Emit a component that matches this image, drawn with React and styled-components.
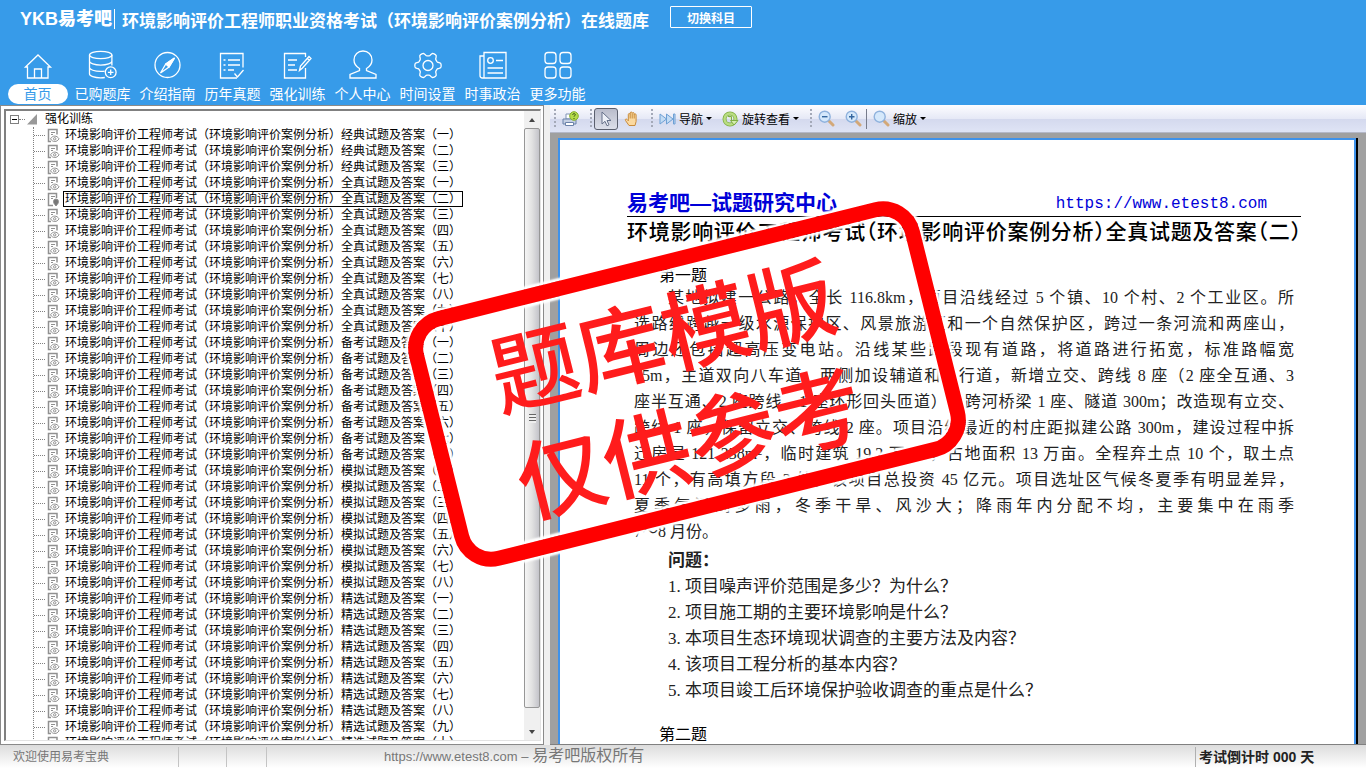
import React from "react";
import styled, { createGlobalStyle, css } from "styled-components";

const NUMBERS = ["一", "二", "三", "四", "五", "六", "七", "八", "九", "十"];

const SERIES = [
  { name: "经典", count: 3 },
  { name: "全真", count: 10 },
  { name: "备考", count: 8 },
  { name: "模拟", count: 8 },
  { name: "精选", count: 10 },
];

const PAPERS = SERIES.flatMap((series) =>
  NUMBERS.slice(0, series.count).map((number) => ({
    id: `${series.name}-${number}`,
    title: `环境影响评价工程师考试（环境影响评价案例分析）${series.name}试题及答案（${number}）`,
  }))
);

const SELECTED = "全真-二";

const BODY_LINES = [
  "选路线跨越一级水源保护区、风景旅游区和一个自然保护区，跨过一条河流和两座山，",
  "周边还包括超高压变电站。沿线某些路段现有道路，将道路进行拓宽，标准路幅宽",
  "75m，主道双向八车道，两侧加设辅道和人行道，新增立交、跨线 8 座（2 座全互通、3",
  "座半互通、2 座跨线、1 座环形回头匝道），跨河桥梁 1 座、隧道 300m；改造现有立交、",
  "跨线 1 座，保留立交、跨线 2 座。项目沿线最近的村庄距拟建公路 300m，建设过程中拆",
  "迁房屋 121 238m²，临时建筑 19.2 万 m²，占地面积 13 万亩。全程弃土点 10 个，取土点",
  "11 个，有高填方段 3 处。该项目总投资 45 亿元。项目选址区气候冬夏季有明显差异，",
  "夏季气温高多雨，冬季干旱、风沙大；降雨年内分配不均，主要集中在雨季",
];

const QUESTIONS = [
  "1. 项目噪声评价范围是多少？为什么？",
  "2. 项目施工期的主要环境影响是什么？",
  "3. 本项目生态环境现状调查的主要方法及内容？",
  "4. 该项目工程分析的基本内容？",
  "5. 本项目竣工后环境保护验收调查的重点是什么？",
];

const gearPoints = Array.from({ length: 72 }, (_, i) => {
  const angle = (i * Math.PI) / 36;
  const radius = 11.4 + 1.8 * Math.tanh(2 * Math.cos(6 * angle));
  return `${(16 + radius * Math.cos(angle)).toFixed(2)},${(16.5 + radius * Math.sin(angle)).toFixed(2)}`;
}).join(" ");

const NAV = [
  {
    name: "首页",
    icon: (
      <>
        <path d="M3.500 18 16 6l12.500 12h-2.500v11H5.500V18z" />
        <path d="M12.500 29v-9h7v9" />
      </>
    ),
  },
  {
    name: "已购题库",
    icon: (
      <>
        <ellipse cx="13.700" cy="6" rx="11.200" ry="3.700" />
        <path d="M2.500 6v19c0 2 5 3.800 11 3.800 1.500 0 3-.1 4.300-.3M24.900 6v10.500M2.500 12.300c0 2 5 3.800 11.200 3.800s11.200-1.800 11.200-3.800M2.500 18.600c0 2 5 3.800 11.200 3.800 1.400 0 2.700 0 4-.3" />
        <circle cx="23.700" cy="23.300" r="5.400" />
        <path d="M23.700 20.500v5.600M20.900 23.300h5.600" />
      </>
    ),
  },
  {
    name: "介绍指南",
    icon: (
      <>
        <circle cx="15.500" cy="16" r="12.500" />
        <path d="M22.500 9 17 18l-8.500 6L13.800 15z" />
        <path d="M22.500 9 13.800 15l3.200 3z" fill="#fff" />
      </>
    ),
  },
  {
    name: "历年真题",
    icon: (
      <>
        <path d="M26 18.500V4.500H3.500V29H20" />
        <path d="M6.500 11h2M11 11h12M6.500 16h2M11 16h12M6.500 21h2M11 21h6M17.500 24.500l3 3.500 6-7" />
      </>
    ),
  },
  {
    name: "强化训练",
    icon: (
      <>
        <path d="M23.500 8V4.500h-21V29h21V19" />
        <path d="M6 11h9M6 16h7M6 21h9M17.500 21.500l1-4.500L27 7.500l2 2-8.500 9.500zM25.500 9.500l2 2" />
      </>
    ),
  },
  {
    name: "个人中心",
    icon: (
      <path d="M12.500 19.500C9 17.500 7 14.500 7 11c0-5.500 4-9 9-9s9 3.500 9 9c0 3.500-2 6.500-5.500 8.500v2l9.500 4V29H3v-3.500l9.500-4z" />
    ),
  },
  {
    name: "时间设置",
    icon: (
      <>
        <polygon points={gearPoints} />
        <circle cx="16" cy="16.500" r="5" />
      </>
    ),
  },
  {
    name: "时事政治",
    icon: (
      <>
        <path d="M7 29V3.500h22V29H5.500A2.500 2.500 0 0 1 3 26.500V7h4M7 7v19" />
        <circle cx="13.500" cy="11.500" r="2.800" />
        <path d="M19 11.500h7M10.500 19h15.500M10.500 24h15.500" />
      </>
    ),
  },
  {
    name: "更多功能",
    icon: (
      <>
        <rect x="3" y="3.500" width="11" height="11" rx="3" />
        <rect x="18" y="3.500" width="11" height="11" rx="3" />
        <rect x="3" y="18" width="11" height="11" rx="3" />
        <rect x="18" y="18" width="11" height="11" rx="3" />
      </>
    ),
  },
];

function PaperIcon({ current }) {
  return (
    <svg width="13" height="15" viewBox="0 0 13 15" fill="none" stroke="#909090" aria-hidden="true">
      <path d={current ? "M9.500 6V1.500h-8v12h4.500" : "M10 6.500V1.500H1.500v12H4"} strokeWidth="1.500" />
      <path d="M4 4.500h4M4 6.500h2" />
      {current ? (
        <path d="M9 14c-2-2.500-2.500-3-2.500-4.500a2.500 2.500 0 0 1 5 0C11.500 11 11 11.500 9 14z" fill="#777" />
      ) : (
        <>
          <path d="M3.500 10.800c2-3.600 6.500-3.600 8.500 0-2 3.600-6.500 3.600-8.500 0z" fill="#fff" />
          <circle cx="7.700" cy="10.800" r="1.200" />
        </>
      )}
    </svg>
  );
}

function PrintIcon() {
  return (
    <svg width="17" height="16" viewBox="0 0 17 16" aria-hidden="true">
      <path d="M4 3h7v5H4z" fill="#fff" stroke="#7f93b5" />
      <path d="M1 8h13v5H1z" fill="#c5d0e4" stroke="#6b82aa" />
      <path d="M3.500 11.500h8v3h-8z" fill="#fff" stroke="#6b82aa" />
      <circle cx="12" cy="5" r="4.300" fill="#b4dc4a" stroke="#86ad32" />
      <path d="M10.700 4c0-2 3-1.600 2.600 0-.2.700-1.300.8-1.300 1.700M12 7v1" fill="none" stroke="#365010" />
    </svg>
  );
}

function PointerIcon() {
  return (
    <svg width="16" height="18" viewBox="0 0 16 18" aria-hidden="true">
      <path d="M4 2v12l3-2.700 2 4.500 2-1-2-4.300h4z" fill="#eef1f8" stroke="#66718a" />
    </svg>
  );
}

function HandIcon() {
  return (
    <svg width="16" height="16" viewBox="0 0 16 16" aria-hidden="true">
      <path
        d="M5 14.500 1.500 9.500c-.8-1.300.7-2 1.600-1l1.200 1.300V3.500c0-1.300 1.800-1.300 1.900 0V2c.1-1.400 2-1.300 2 0v.5c.2-1.300 2-1.200 2 .1v1c.3-1.100 1.900-1 1.900.3v6.600L11 14.500z"
        fill="#fbd9a0"
        stroke="#c98b3b"
      />
      <path d="M6.200 3.500v4M8.200 3v4.500M10.200 3.500v4" stroke="#c98b3b" />
    </svg>
  );
}

function NavigateIcon() {
  return (
    <svg width="17" height="14" viewBox="0 0 17 14" fill="#c3dcf5" stroke="#6ea0d4" aria-hidden="true">
      <path d="M1 2l6.500 5L1 12zM7.500 2 14 7l-6.500 5zM14.500 2h1.500v10h-1.500z" />
    </svg>
  );
}

function RotateIcon() {
  return (
    <svg width="17" height="16" viewBox="0 0 17 16" fill="none" aria-hidden="true">
      <circle cx="8" cy="8" r="5.500" stroke="#7fae43" strokeWidth="4" />
      <circle cx="8" cy="8" r="5.500" stroke="#b9dd82" strokeWidth="2.400" />
      <path d="M6 5.500h3.500V9M8.500 9.500H16L12 14z" stroke="#7fae43" fill="#d5edb0" />
    </svg>
  );
}

function LensIcon({ sign }) {
  return (
    <svg width="17" height="17" viewBox="0 0 17 17" aria-hidden="true">
      <path d="M10.500 10.500 15 15" stroke="#d3a878" strokeWidth="3" strokeLinecap="round" />
      <circle cx="6.700" cy="6.700" r="5.500" fill="#d5e8fb" stroke="#8fb2dd" strokeWidth="1.400" />
      {sign && <path d={sign === "plus" ? "M4 6.700h5.500M6.700 4v5.500" : "M4 6.700h5.500"} stroke="#34669f" strokeWidth="1.400" />}
    </svg>
  );
}

export default function App() {
  return (
    <Screen>
      <GlobalStyle />
      <Header>
        <TitleRow>
          <Brand>YKB易考吧</Brand>
          <Title>环境影响评价工程师职业资格考试（环境影响评价案例分析）在线题库</Title>
          <SwitchButton type="button">切换科目</SwitchButton>
        </TitleRow>
        <Nav>
          {NAV.map((item, index) => (
            <NavLink key={item.name} href="#">
              <svg width="32" height="32" viewBox="0 0 32 32" fill="none" stroke="#fff" strokeWidth="1.300" aria-hidden="true">
                {item.icon}
              </svg>
              <NavLabel $active={index === 0}>{item.name}</NavLabel>
            </NavLink>
          ))}
        </Nav>
      </Header>

      <Main>
        <Sidebar>
          <TreeFrame>
            <Tree>
              <Root>
                <Toggle type="button" aria-label="收起" />
                <Branch $short />
                <svg width="12" height="11" viewBox="0 0 12 11" aria-hidden="true">
                  <path d="M10 0v10.500H0z" fill="#999" />
                </svg>
                <RootName>强化训练</RootName>
              </Root>
              <Papers>
                {PAPERS.map((paper) => (
                  <PaperRow key={paper.id}>
                    <Branch />
                    <PaperIcon current={paper.id === SELECTED} />
                    <PaperButton type="button" $selected={paper.id === SELECTED}>
                      {paper.title}
                    </PaperButton>
                  </PaperRow>
                ))}
              </Papers>
            </Tree>
            <Scrollbar>
              <ScrollButton type="button" aria-label="向上" $up />
              <Thumb>
                <Ridge />
              </Thumb>
              <ScrollButton type="button" aria-label="向下" />
            </Scrollbar>
          </TreeFrame>
        </Sidebar>

        <Viewer>
          <Toolbar>
            <Grip />
            <ToolButton type="button" aria-label="打印">
              <PrintIcon />
            </ToolButton>
            <Grip />
            <ToolButton type="button" aria-label="选择" $pressed>
              <PointerIcon />
            </ToolButton>
            <ToolButton type="button" aria-label="拖动">
              <HandIcon />
            </ToolButton>
            <Grip />
            <ToolButton type="button">
              <NavigateIcon />
              导航
              <Caret />
            </ToolButton>
            <ToolButton type="button">
              <RotateIcon />
              旋转查看
              <Caret />
            </ToolButton>
            <Grip />
            <ToolButton type="button" aria-label="缩小">
              <LensIcon sign="minus" />
            </ToolButton>
            <ToolButton type="button" aria-label="放大">
              <LensIcon sign="plus" />
            </ToolButton>
            <Divider />
            <ToolButton type="button">
              <LensIcon />
              缩放
              <Caret />
            </ToolButton>
          </Toolbar>
          <Desk>
            <Page>
              <PageHead>
                <Center>易考吧—试题研究中心</Center>
                <SiteLink href="#">https://www.etest8.com</SiteLink>
              </PageHead>
              <PaperTitle>环境影响评价工程师考试（环境影响评价案例分析）全真试题及答案（二）</PaperTitle>
              <Heading>第一题</Heading>
              <Scan>
                <Line $indent>某地拟建一公路，全长 116.8km，项目沿线经过 5 个镇、10 个村、2 个工业区。所</Line>
                {BODY_LINES.map((line) => (
                  <Line key={line}>{line}</Line>
                ))}
                <Line $last>7～8 月份。</Line>
                <QuestionList>
                  <QuestionHead>问题：</QuestionHead>
                  {QUESTIONS.map((question) => (
                    <p key={question}>{question}</p>
                  ))}
                </QuestionList>
              </Scan>
              <Heading>第二题</Heading>
            </Page>
          </Desk>
        </Viewer>
      </Main>

      <Status>
        <Welcome>欢迎使用易考宝典</Welcome>
        <StatusCell $width={48} />
        <StatusCell $width={40} />
        <Copyright>
          <small>https://www.etest8.com – </small>易考吧版权所有
        </Copyright>
        <Countdown>考试倒计时 000 天</Countdown>
      </Status>

      <Stamp>
        题库模版
        <br />
        仅供参考
      </Stamp>
    </Screen>
  );
}

const GlobalStyle = createGlobalStyle`
  * {
    box-sizing: border-box;
  }

  body {
    margin: 0;
    font-family: "Liberation Sans", "Noto Sans CJK SC", sans-serif;
    font-size: 12px;
    color: #000;
    text-spacing-trim: space-all;
  }

  h1, h2, p, ul {
    margin: 0;
    padding: 0;
  }

  button {
    margin: 0;
    padding: 0;
    border: none;
    background: none;
    font: inherit;
    color: inherit;
  }

  svg {
    flex: none;
  }
`;

const Screen = styled.div`
  position: relative;
  display: flex;
  flex-direction: column;
  height: 100vh;
  overflow: hidden;
`;

const Header = styled.header`
  background: #379be9;
  color: #fff;
  padding-bottom: 1px;
`;

const TitleRow = styled.div`
  display: flex;
  align-items: center;
  height: 38px;
  padding-left: 20px;
`;

const Brand = styled.span`
  padding-right: 2px;
  border-right: 1px solid #fff;
  font-size: 18px;
  line-height: 20px;
  font-weight: 900;
  white-space: nowrap;
`;

const Title = styled.h1`
  margin-left: 7px;
  font-size: 17px;
  font-weight: 700;
  white-space: nowrap;
`;

const SwitchButton = styled.button`
  width: 82px;
  height: 22px;
  margin: 0 0 4px 21px;
  border: 1px solid #fff;
  border-radius: 1px;
  font-weight: 700;
`;

const Nav = styled.nav`
  display: flex;
  padding: 11px 0 0 5px;
`;

const NavLink = styled.a`
  display: flex;
  flex-direction: column;
  align-items: center;
  gap: 3px;
  width: 65px;
  color: #fff;
  text-decoration: none;
`;

const NavLabel = styled.span`
  min-width: 60px;
  font-size: 14px;
  line-height: 20px;
  text-align: center;
  ${(props) =>
    props.$active &&
    css`
      border-radius: 10px;
      background: #fff;
      color: #379be9;
    `}
`;

const Main = styled.main`
  flex: 1;
  display: flex;
  min-height: 0;
  background: #f0f0f0;
`;

const Sidebar = styled.aside`
  flex: none;
  display: flex;
  width: 544px;
  padding: 3px 2px 3px 3px;
  border: 1px solid #8a8a8a;
  background: #fff;
`;

const TreeFrame = styled.div`
  flex: 1;
  display: flex;
  min-width: 0;
  border: 1px solid #e3e3e3;
  border-top: 2px solid #808080;
  border-left: 2px solid #808080;
`;

const Tree = styled.div`
  flex: 1;
  overflow: hidden;
`;

const Root = styled.div`
  display: flex;
  align-items: center;
  height: 16px;
  padding-left: 4px;
`;

const Toggle = styled.button`
  display: flex;
  align-items: center;
  justify-content: center;
  width: 9px;
  height: 9px;
  border: 1px solid #808080;

  &::before {
    content: "";
    width: 5px;
    height: 1px;
    background: #000;
  }
`;

const Branch = styled.span`
  width: ${(props) => (props.$short ? "6px" : "11px")};
  margin-right: 2px;
  border-top: 1px dotted #808080;
`;

const RootName = styled.span`
  margin-left: 6px;
  line-height: 16px;
`;

const Papers = styled.ul`
  margin-left: 27px;
  border-left: 1px dotted #808080;
  list-style: none;
`;

const PaperRow = styled.li`
  display: flex;
  align-items: center;
  height: 16px;
`;

const PaperButton = styled.button`
  height: 16px;
  margin-left: 3px;
  padding: 0 1px;
  border: 1px solid ${(props) => (props.$selected ? "#000" : "transparent")};
  line-height: 14px;
  white-space: nowrap;
`;

const Scrollbar = styled.div`
  display: flex;
  flex-direction: column;
  width: 16px;
  background: #f0f0f0;
`;

const ScrollButton = styled.button`
  display: flex;
  align-items: center;
  justify-content: center;
  height: 17px;

  &::before {
    content: "";
    border: 3px solid transparent;
    ${(props) =>
      props.$up
        ? "border-top: none; border-bottom: 4px solid #444;"
        : "border-bottom: none; border-top: 4px solid #444;"}
  }
`;

const Thumb = styled.div`
  flex: 1;
  display: flex;
  align-items: center;
  justify-content: center;
  margin-bottom: 15px;
  border: 1px solid #979797;
  border-radius: 2px;
  background: linear-gradient(90deg, #f5f5f5, #e2e2e2 50%, #c4c4ca);
`;

const Ridge = styled.span`
  width: 7px;
  height: 9px;
  background: repeating-linear-gradient(#666 0 1px, #eee 1px 3px);
`;

const Viewer = styled.section`
  flex: 1;
  display: flex;
  flex-direction: column;
  min-width: 0;
  margin-left: 6px;
`;

const Toolbar = styled.div`
  display: flex;
  align-items: center;
  height: 28px;
  padding-left: 4px;
  border-bottom: 1px solid #b4b8c8;
  background: linear-gradient(#fdfdff, #e6e9f6 50%, #d4d9ee 52%, #dfe4f5);
`;

const Grip = styled.span`
  width: 2px;
  height: 20px;
  background: repeating-linear-gradient(#a4a9b8 0 2px, transparent 2px 4px);

  &:not(:first-child) {
    margin-left: 7px;
  }
`;

const ToolButton = styled.button`
  display: flex;
  align-items: center;
  gap: 3px;
  height: 22px;
  margin-left: 2px;
  padding: 0 3px;
  border: 1px solid transparent;
  border-radius: 3px;
  white-space: nowrap;
  ${(props) =>
    props.$pressed &&
    css`
      border-color: #5a5f6e;
      background: linear-gradient(#b9bccb, #dcdfea);
    `}
`;

const Caret = styled.span`
  border: 3px solid transparent;
  border-top-color: #000;
  border-bottom: none;
`;

const Divider = styled.span`
  width: 1px;
  height: 20px;
  background: #777c8c;
`;

const Desk = styled.div`
  flex: 1;
  display: flex;
  min-height: 0;
  padding: 5px 10px 0 8px;
  overflow: hidden;
  background: #a0a0a0;
  border-bottom: 1px solid #808080;
`;

const Page = styled.article`
  flex: 1;
  min-width: 0;
  height: max-content;
  min-height: 100%;
  padding: 51px 53px 0 67px;
  border: 2px solid #3f92ea;
  border-bottom: none;
  background: #fff;
  box-shadow: 2px 0 0 #000;
`;

const PageHead = styled.header`
  display: flex;
  align-items: flex-end;
  justify-content: space-between;
  height: 26px;
  padding-right: 34px;
  border-bottom: 1px solid #000;
  color: #0000d8;
`;

const Center = styled.strong`
  font-size: 21px;
  line-height: 26px;
  white-space: nowrap;
`;

const SiteLink = styled.a`
  font-family: "Liberation Mono", monospace;
  font-size: 16px;
  line-height: 24px;
  color: inherit;
  text-decoration: none;
`;

const PaperTitle = styled.h2`
  font-size: 21px;
  font-weight: 500;
  line-height: 30px;
  font-feature-settings: "halt";
  text-align: justify;
  text-align-last: justify;
  white-space: nowrap;
`;

const Heading = styled.h2`
  margin-top: 20px;
  padding-left: 32px;
  font-size: 16px;
  font-weight: 400;
  line-height: 18px;
`;

const Scan = styled.div`
  padding: 0 7px;
  font-family: "Liberation Serif", "Noto Sans CJK SC", serif;
  font-size: 17px;
  line-height: 26px;
  color: #222;
`;

const Line = styled.p`
  padding-left: ${(props) => (props.$indent ? "34px" : "0")};
  font-size: 16px;
  text-align-last: ${(props) => (props.$last ? "left" : "justify")};
  white-space: nowrap;
`;

const QuestionList = styled.div`
  padding: 3px 0 2px 34px;
`;

const QuestionHead = styled.p`
  font-weight: 700;
`;

const Status = styled.footer`
  display: flex;
  align-items: center;
  height: 23px;
  background: linear-gradient(#dcdcdc, #fff);
  color: #777;
  white-space: nowrap;
`;

const Welcome = styled.span`
  width: 179px;
  padding-left: 13px;
  border-right: 1px solid #c4c4c4;
  line-height: 20px;
`;

const StatusCell = styled.span`
  width: ${(props) => props.$width}px;
  height: 20px;
  border-right: 1px solid #c4c4c4;
`;

const Copyright = styled.span`
  flex: 1;
  padding-left: 117px;
  font-size: 16px;
  line-height: 20px;

  small {
    font-size: 13px;
  }
`;

const Countdown = styled.strong`
  width: 171px;
  padding-left: 3px;
  border-left: 1px solid #b0b0b0;
  font-size: 14px;
  line-height: 20px;
  color: #222;
`;

const Stamp = styled.div`
  position: absolute;
  top: 50%;
  left: calc(50% + 4px);
  width: 526px;
  height: 262px;
  padding: 4px 24px 0 0;
  border: 15px solid #f00;
  border-radius: 38px;
  box-shadow: 0 0 2px 3px #fff, inset 0 0 2px 3px #fff;
  font-family: "Noto Sans CJK SC", sans-serif;
  font-size: 88px;
  font-weight: 500;
  line-height: 110px;
  text-align: center;
  white-space: nowrap;
  color: #ff1c1c;
  transform: translate(-50%, -50%) rotate(-14deg);
  pointer-events: none;
`;
